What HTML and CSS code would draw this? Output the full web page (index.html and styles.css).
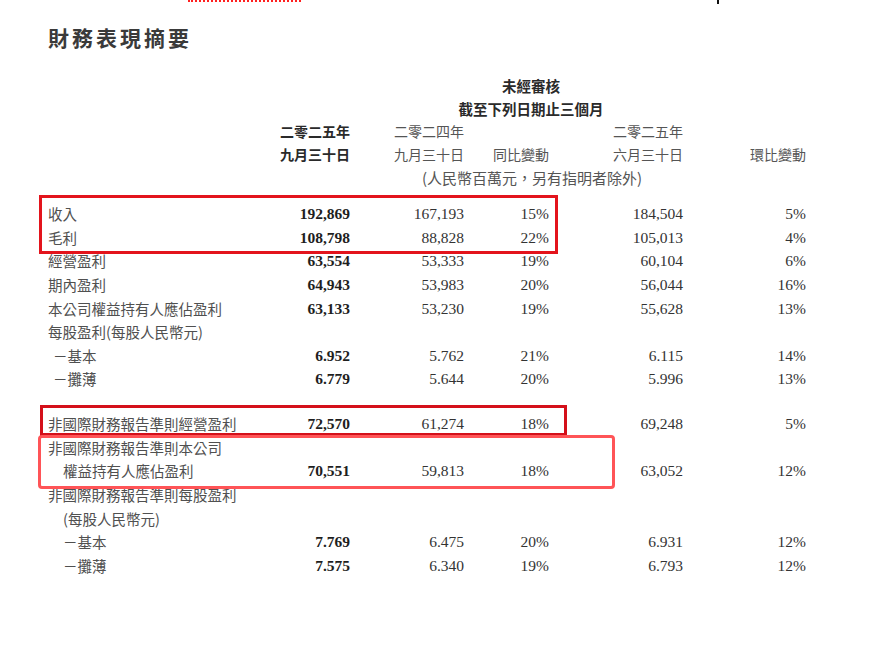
FILE: index.html
```html
<!DOCTYPE html>
<html lang="zh-Hant">
<head>
<meta charset="utf-8">
<link rel="stylesheet" href="styles.css">
</head>
<body>
<div class="page">
  <div class="dots"></div>
  <div class="tick"></div>

  <h1 class="title">財務表現摘要</h1>

  <div class="head">
    <div class="hrow"><div class="span bold">未經審核</div></div>
    <div class="hrow"><div class="span bold">截至下列日期止三個月</div></div>
    <div class="hrow">
      <div></div>
      <div class="c bold">二零二五年</div>
      <div class="c">二零二四年</div>
      <div></div>
      <div class="c">二零二五年</div>
      <div></div>
    </div>
    <div class="hrow">
      <div></div>
      <div class="c bold">九月三十日</div>
      <div class="c">九月三十日</div>
      <div class="c">同比變動</div>
      <div class="c">六月三十日</div>
      <div class="c">環比變動</div>
    </div>
    <div class="hrow"><div class="unit">(人民幣百萬元，另有指明者除外)</div></div>
  </div>

  <div class="body">
    <div class="row"><div class="lbl">收入</div><div class="n b">192,869</div><div class="n">167,193</div><div class="n">15%</div><div class="n">184,504</div><div class="n">5%</div></div>
    <div class="row"><div class="lbl">毛利</div><div class="n b">108,798</div><div class="n">88,828</div><div class="n">22%</div><div class="n">105,013</div><div class="n">4%</div></div>
    <div class="row"><div class="lbl">經營盈利</div><div class="n b">63,554</div><div class="n">53,333</div><div class="n">19%</div><div class="n">60,104</div><div class="n">6%</div></div>
    <div class="row"><div class="lbl">期內盈利</div><div class="n b">64,943</div><div class="n">53,983</div><div class="n">20%</div><div class="n">56,044</div><div class="n">16%</div></div>
    <div class="row"><div class="lbl">本公司權益持有人應佔盈利</div><div class="n b">63,133</div><div class="n">53,230</div><div class="n">19%</div><div class="n">55,628</div><div class="n">13%</div></div>
    <div class="row"><div class="lbl">每股盈利(每股人民幣元)</div></div>
    <div class="row"><div class="lbl sub1">－基本</div><div class="n b">6.952</div><div class="n">5.762</div><div class="n">21%</div><div class="n">6.115</div><div class="n">14%</div></div>
    <div class="row"><div class="lbl sub1">－攤薄</div><div class="n b">6.779</div><div class="n">5.644</div><div class="n">20%</div><div class="n">5.996</div><div class="n">13%</div></div>

    <div class="row gap"><div class="lbl">非國際財務報告準則經營盈利</div><div class="n b">72,570</div><div class="n">61,274</div><div class="n">18%</div><div class="n">69,248</div><div class="n">5%</div></div>
    <div class="row"><div class="lbl">非國際財務報告準則本公司</div></div>
    <div class="row"><div class="lbl sub2">權益持有人應佔盈利</div><div class="n b">70,551</div><div class="n">59,813</div><div class="n">18%</div><div class="n">63,052</div><div class="n">12%</div></div>
    <div class="row"><div class="lbl">非國際財務報告準則每股盈利</div></div>
    <div class="row"><div class="lbl sub2">(每股人民幣元)</div></div>
    <div class="row"><div class="lbl sub2">－基本</div><div class="n b">7.769</div><div class="n">6.475</div><div class="n">20%</div><div class="n">6.931</div><div class="n">12%</div></div>
    <div class="row"><div class="lbl sub2">－攤薄</div><div class="n b">7.575</div><div class="n">6.340</div><div class="n">19%</div><div class="n">6.793</div><div class="n">12%</div></div>
  </div>

  <div class="box box1"></div>
  <div class="box box2"></div>
  <div class="box box3"></div>
</div>
</body>
</html>
```

FILE: styles.css
```css
html, body {
  margin: 0;
  padding: 0;
  background: #fff;
}

.page {
  position: relative;
  width: 876px;
  height: 651px;
  overflow: hidden;
  padding: 22px 0 0 48px;
  box-sizing: border-box;
  font-family: "Noto Sans CJK TC", "Noto Sans CJK SC", sans-serif;
  color: #444;
}

.title {
  margin: 0;
  font-size: 21px;
  line-height: 30px;
  font-weight: 700;
  letter-spacing: 3px;
  color: #3a3a3a;
}

.head {
  margin-top: 21.5px;
}

.hrow,
.row {
  display: grid;
  grid-template-columns: 232px 70px 114px 85px 134px 123px;
}

.hrow {
  height: 23px;
  line-height: 23px;
  font-size: 14px;
  color: #555;
}

.span {
  grid-column: 3 / 6;
  padding-left: 29px;
  text-align: center;
  white-space: nowrap;
  font-size: 14.5px;
}

.bold {
  font-weight: 700;
  color: #2a2a2a;
}

.c {
  text-align: right;
  white-space: nowrap;
}

.unit {
  grid-column: 2 / 7;
  padding-left: 142px;
  font-size: 15px;
  white-space: nowrap;
}

.body {
  margin-top: 13.7px;
}

.row {
  height: 23.6px;
  line-height: 23.6px;
}

.row.gap {
  margin-top: 21.2px;
}

.lbl {
  font-size: 14.5px;
  color: #505050;
  white-space: nowrap;
}

.sub1 {
  padding-left: 5px;
}

.sub2 {
  padding-left: 15px;
}

.n {
  font-family: "Liberation Serif", "Times New Roman", serif;
  font-size: 15.5px;
  text-align: right;
  color: #333;
  white-space: nowrap;
}

.n.b {
  font-weight: 700;
  color: #1e1e1e;
}

/* annotation overlays */
.box {
  position: absolute;
  box-sizing: border-box;
}

.box1 {
  left: 39px;
  top: 195px;
  width: 519px;
  height: 59px;
  border: 3px solid #e3141c;
}

.box2 {
  left: 40px;
  top: 405px;
  width: 527px;
  height: 31px;
  border: 3px solid #d4101a;
}

.box3 {
  left: 38px;
  top: 435px;
  width: 577px;
  height: 54px;
  border: 3.5px solid #ff5457;
  border-radius: 4px;
}

.dots {
  position: absolute;
  left: 188px;
  top: 0;
  width: 113px;
  height: 0;
  border-top: 2px dotted #ff2020;
}

.tick {
  position: absolute;
  left: 717px;
  top: 0;
  width: 2px;
  height: 4px;
  background: #111;
}
```
